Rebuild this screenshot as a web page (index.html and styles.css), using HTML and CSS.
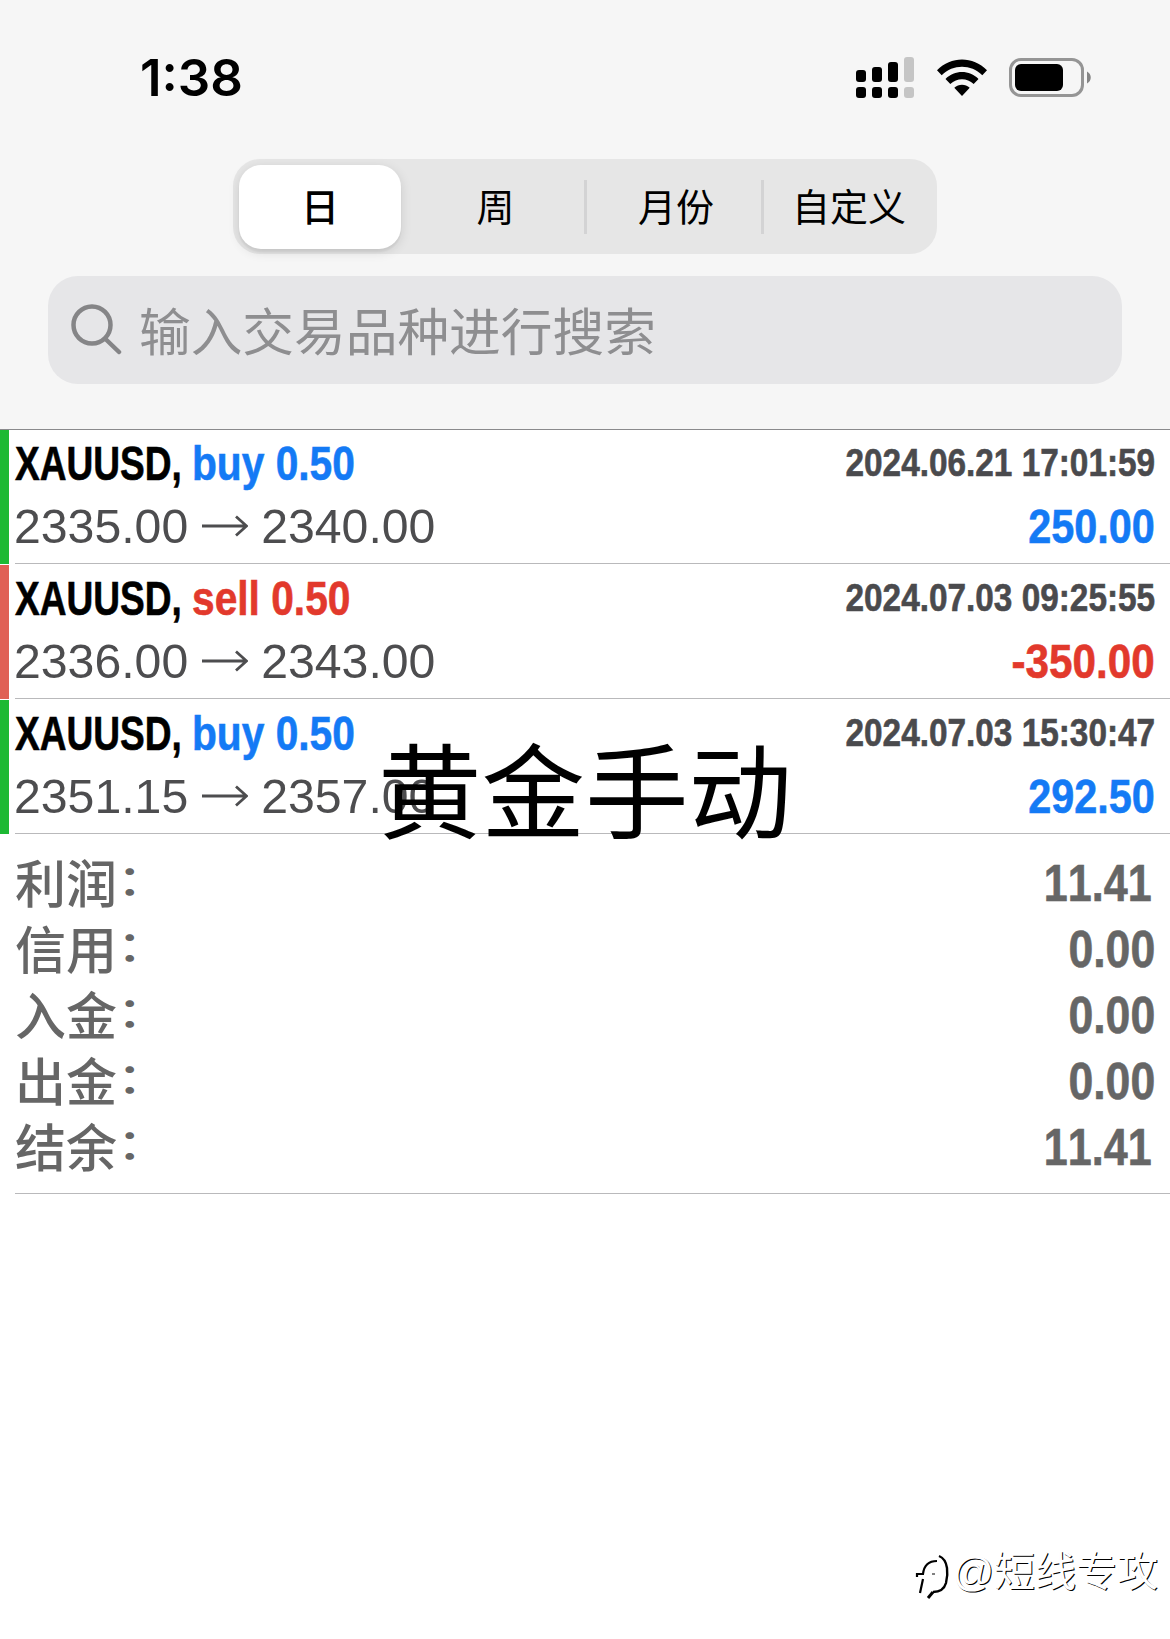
FILE: index.html
```
<!DOCTYPE html>
<html lang="zh-CN">
<head>
    <meta charset="UTF-8">
    <meta name="viewport" content="width=device-width, initial-scale=1.0">
    <title>历史</title>
    <link rel="stylesheet" href="styles.css">
</head>
<body>
    <header class="header">
        <!-- 状态栏 -->
        <div class="status-bar">
            <span class="time">1:38</span>
            <div class="status-icons">
                <svg class="signal" width="60" height="42" viewBox="0 0 60 42">
                    <rect x="1" y="13" width="10" height="12" rx="3"/>
                    <rect x="17" y="10" width="10" height="15" rx="3"/>
                    <rect x="33" y="5" width="10" height="20" rx="3"/>
                    <rect class="off" x="49" y="0" width="10" height="25" rx="3"/>
                    <rect x="1" y="30" width="10" height="11" rx="3"/>
                    <rect x="17" y="30" width="10" height="11" rx="3"/>
                    <rect x="33" y="30" width="10" height="11" rx="3"/>
                    <rect class="off" x="49" y="30" width="10" height="11" rx="3"/>
                </svg>
                <svg class="wifi" width="52" height="38" viewBox="0 0 52 38">
                    <path d="M1 11.3C15-3.2 37-3.2 51 11.3L46.3 16.2C34.8 5 17.2 5 5.7 16.2Z"/>
                    <path d="M9.5 20C18.5 10.8 33.5 10.8 42.5 20L37.7 25C31 18.6 21 18.6 14.3 25Z"/>
                    <path d="M18.3 28.8C22.6 24.8 29.4 24.8 33.7 28.8L26 37Z"/>
                </svg>
                <svg class="battery" width="84" height="40" viewBox="0 0 84 40">
                    <rect class="shell" x="1.5" y="1.5" width="72" height="36" rx="10.5"/>
                    <rect x="6" y="6" width="48" height="27" rx="6"/>
                    <path class="cap" d="M78 13.5C83 16 83 23 78 25.5Z"/>
                </svg>
            </div>
        </div>

        <div class="segments">
            <div class="segment active">日</div>
            <div class="segment">周</div>
            <div class="segment line">月份</div>
            <div class="segment line">自定义</div>
        </div>

        <div class="search">
            <svg class="search-icon" width="52" height="52" viewBox="0 0 52 52">
                <circle cx="21" cy="22" r="18.5"/>
                <path d="M34.5 36L48 49"/>
            </svg>
            <span>输入交易品种进行搜索</span>
        </div>
    </header>

    <!-- 成交记录 -->
    <div class="deals">
        <div class="deal green">
            <div class="deal-body">
                <div class="row">
                    <span class="symbol">XAUUSD,</span>
                    <span class="type buy">buy 0.50</span>
                    <span class="date">2024.06.21 17:01:59</span>
                </div>
                <div class="row">
                    <span class="price">2335.00</span>
                    <svg class="arrow" width="46" height="22" viewBox="0 0 46 22"><path d="M0 11H44M34 1.5L44.5 11L34 20.5"/></svg>
                    <span class="price">2340.00</span>
                    <span class="profit buy">250.00</span>
                </div>
            </div>
        </div>
        <div class="deal red">
            <div class="deal-body">
                <div class="row">
                    <span class="symbol">XAUUSD,</span>
                    <span class="type sell">sell 0.50</span>
                    <span class="date">2024.07.03 09:25:55</span>
                </div>
                <div class="row">
                    <span class="price">2336.00</span>
                    <svg class="arrow" width="46" height="22" viewBox="0 0 46 22"><path d="M0 11H44M34 1.5L44.5 11L34 20.5"/></svg>
                    <span class="price">2343.00</span>
                    <span class="profit sell">-350.00</span>
                </div>
            </div>
        </div>
        <div class="deal green">
            <div class="deal-body">
                <div class="row">
                    <span class="symbol">XAUUSD,</span>
                    <span class="type buy">buy 0.50</span>
                    <span class="date">2024.07.03 15:30:47</span>
                </div>
                <div class="row">
                    <span class="price">2351.15</span>
                    <svg class="arrow" width="46" height="22" viewBox="0 0 46 22"><path d="M0 11H44M34 1.5L44.5 11L34 20.5"/></svg>
                    <span class="price">2357.00</span>
                    <span class="profit buy">292.50</span>
                </div>
            </div>
        </div>
    </div>

    <!-- 汇总 -->
    <div class="summary">
        <div class="sum-row"><span>利润<i>：</i></span><b class="one">11.41</b></div>
        <div class="sum-row"><span>信用<i>：</i></span><b>0.00</b></div>
        <div class="sum-row"><span>入金<i>：</i></span><b>0.00</b></div>
        <div class="sum-row"><span>出金<i>：</i></span><b>0.00</b></div>
        <div class="sum-row"><span>结余<i>：</i></span><b class="one">11.41</b></div>
    </div>

    <div class="caption">黄金手动</div>

    <div class="watermark">
        <svg width="36" height="54" viewBox="0 0 36 54">
            <path d="M5 48L8 34M2 32V29H8C9 20 14 16 22 16" stroke-width="2.2"/>
            <path d="M24 11C34 15 33 30 31 38C29 45 24 47 18 47" stroke-width="2.4"/>
            <path d="M18 47L13 53" stroke-width="3"/>
            <path d="M17 29H20" stroke-width="1"/>
        </svg>
        <span>@短线专攻</span>
    </div>
</body>
</html>
```

FILE: styles.css
```
* {
    box-sizing: border-box;
}

body {
    margin: 0;
    width: 1170px;
    height: 1639px;
    position: relative;
    overflow: hidden;
    background: #fff;
    color: #000;
    font-family: "Liberation Sans", "Noto Sans CJK SC", sans-serif;
    font-kerning: none;
    white-space: nowrap;
}

.header {
    height: 430px;
    background: #f6f6f6;
    border-bottom: 1px solid #8a8a8c;
}

.status-bar {
    height: 159px;
    padding: 0 77px 3px 140px;
    display: flex;
    align-items: center;
    justify-content: space-between;
}

.time {
    font-family: Inter, sans-serif;
    font-size: 51px;
    font-weight: 600;
    padding-bottom: 1px;
}

.status-icons {
    display: flex;
    align-items: center;
    gap: 21px;
}

.signal .off {
    fill: #c5c5c5;
}

.battery .shell {
    fill: none;
    stroke: #959595;
    stroke-width: 3;
}

.battery .cap {
    fill: #858585;
}

/* 日 / 周 / 月份 / 自定义 */
.segments {
    width: 704px;
    height: 95px;
    margin: 0 auto;
    padding: 6px;
    border-radius: 27px;
    background: #e6e6e6;
    display: grid;
    grid-template-columns: 162px 184px 177px 169px;
}

.segment {
    display: flex;
    align-items: center;
    justify-content: center;
    font-size: 38px;
    padding: 0 0 5px 5px;
    position: relative;
}

.segment.active {
    height: 84px;
    padding-left: 0;
    background: #fff;
    border-radius: 22px;
    font-weight: 500;
    box-shadow: 0 3px 12px rgba(0, 0, 0, 0.12), 0 3px 2px rgba(0, 0, 0, 0.05);
}

.segment.line::before {
    content: '';
    position: absolute;
    left: -1px;
    top: 15px;
    width: 3px;
    height: 54px;
    background: #d3d3d4;
}

.search {
    margin: 22px 48px 0;
    height: 108px;
    padding: 0 0 2px 23px;
    border-radius: 30px;
    background: #e6e6e8;
    color: #8e8e90;
    display: flex;
    align-items: center;
    gap: 16px;
    font-size: 51.7px;
}

.search span {
    padding-bottom: 2px;
}

.search-icon {
    fill: none;
    stroke: #858587;
    stroke-width: 4.5;
    stroke-linecap: round;
}

.deal {
    height: 135px;
    padding-left: 15px;
    background: linear-gradient(#1db934, #1db934) left top / 9px 134px no-repeat;
}

.deal.red {
    background-image: linear-gradient(#e06055, #e06055);
}

.deal-body {
    height: 134px;
    padding: 2px 15px 0 0;
    border-bottom: 1px solid #b9b9bb;
}

.row {
    height: 63px;
    display: flex;
    align-items: center;
    font-size: 48px;
}

/* узкое начертание получаем сжатием по горизонтали */
.symbol,
.type,
.date,
.profit,
.sum-row b {
    font-weight: bold;
    transform-origin: left center;
    -webkit-text-stroke: 0.6px currentColor;
}

.symbol {
    width: 177px;
    transform: scaleX(0.772);
}

.type {
    transform: scaleX(0.848);
}

.date,
.profit,
.sum-row b {
    margin-left: auto;
    transform-origin: right center;
}

.date {
    font-size: 39px;
    color: #4a4a4d;
    padding-bottom: 2px;
    transform: scaleX(0.855);
}

.profit {
    transform: scaleX(0.862);
}

.profit.sell {
    transform: scaleX(0.88);
}

.buy {
    color: #147af5;
}

.sell {
    color: #e2392c;
}

.price {
    font-size: 48.2px;
    color: #4d4d4f;
    margin-left: -1px;
    padding-bottom: 2px;
}

.arrow {
    margin: 0 14px 2px;
    fill: none;
    stroke: #4d4d4f;
    stroke-width: 2.8;
}

.summary {
    height: 359px;
    margin-left: 15px;
    padding: 15px 15px 0 0;
    border-bottom: 1px solid #b9b9bb;
    color: #666;
}

.sum-row {
    height: 66px;
    display: flex;
    align-items: center;
    font-size: 51px;
}

.sum-row span {
    font-weight: 500;
    padding-bottom: 5px;
}

.sum-row i {
    font-style: normal;
    display: inline-block;
    transform: translate(0, -4px) scaleY(0.8);
}

.sum-row b {
    transform: scaleX(0.875);
}

.sum-row .one {
    margin-right: 3px;
    transform: scaleX(0.845);
}

.caption {
    position: absolute;
    left: 378px;
    top: 720px;
    font-size: 103.5px;
    line-height: 150px;
}

.watermark {
    position: absolute;
    right: 12px;
    top: 1545px;
    display: flex;
    align-items: center;
    gap: 1px;
    font-size: 41px;
    line-height: 54px;
    color: #fff;
    text-shadow: 1px 1px 0.5px #000;
}

.watermark svg {
    fill: none;
    stroke: #000;
}
```
